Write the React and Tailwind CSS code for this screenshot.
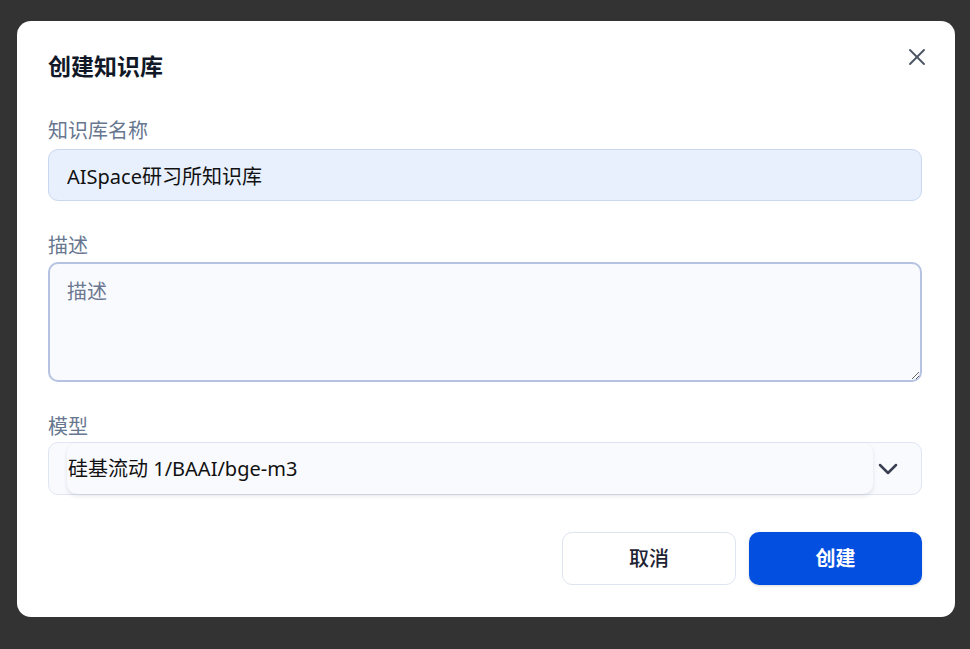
import { X } from 'lucide-react';

const font = { fontFamily: '"Noto Sans", "Noto Sans CJK SC", sans-serif' };

const labelClass = "block text-[20px] leading-[28px] text-[#687790]";

export default function App() {
  return (
    <div className="min-h-screen bg-[#333333] pt-[21px] pl-[17px]" style={font}>
      <div className="relative w-[938px] h-[596px] bg-white rounded-[14px] pl-[31px] pr-[33px] pt-[29px]">
        <h2 className="text-[23px] leading-[32px] font-bold text-[#111827]">创建知识库</h2>
        <button type="button" className="absolute right-[24px] top-[22px] w-[28px] h-[28px] flex items-center justify-center text-[#4b5563]">
          <X size={28} strokeWidth={1.6} />
        </button>

        <div className="mt-[35px]">
          <label className={`${labelClass} mb-[4px]`}>知识库名称</label>
          <input
            className="w-full h-[52px] px-[18px] bg-[#e8f0fd] border border-[#c9d7f0] rounded-[10px] text-[20px] text-[#111111] outline-none"
            defaultValue="AISpace研习所知识库"
          />
        </div>

        <div className="mt-[31px]">
          <label className={`${labelClass} mb-[2px]`}>描述</label>
          <textarea
            className="block w-full h-[120px] px-[17px] pt-[14px] bg-[#f9fafe] border-2 border-[#b5c2e1] rounded-[10px] text-[20px] leading-[28px] text-[#111111] outline-none placeholder:text-[#6b7890]"
            placeholder="描述"
          />
        </div>

        <div className="mt-[31px]">
          <label className={`${labelClass} mb-[1px]`}>模型</label>
          <div className="flex items-stretch h-[53px] bg-[#f9fafe] border border-[#dfe5f2] rounded-[10px] pl-[18px]">
            <div className="flex-1 flex items-center pl-[1px] rounded-[10px] bg-[#f9fafe] shadow-[0_2px_4px_rgba(30,41,80,0.12)] text-[20px] text-[#111111]">
              硅基流动 1/BAAI/bge-m3
            </div>
            <div className="w-[48px] flex items-center justify-start pl-[5px]">
              <svg width="20" height="12" viewBox="0 0 20 12" fill="none" stroke="#3a4152" strokeWidth="2.5" strokeLinecap="round" strokeLinejoin="round">
                <polyline points="2,2 10,10 18,2" />
              </svg>
            </div>
          </div>
        </div>

        <div className="flex justify-end gap-[13px] mt-[37px]">
          <button type="button" className="w-[174px] h-[53px] bg-white border border-[#dfe4f1] rounded-[10px] text-[20px] font-medium text-[#1e2433]">
            取消
          </button>
          <button type="button" className="w-[173px] h-[53px] bg-[#0350e0] rounded-[10px] text-[20px] font-bold text-white shadow-[0_1px_3px_rgba(0,0,0,0.15)]">
            创建
          </button>
        </div>
      </div>
    </div>
  );
}
